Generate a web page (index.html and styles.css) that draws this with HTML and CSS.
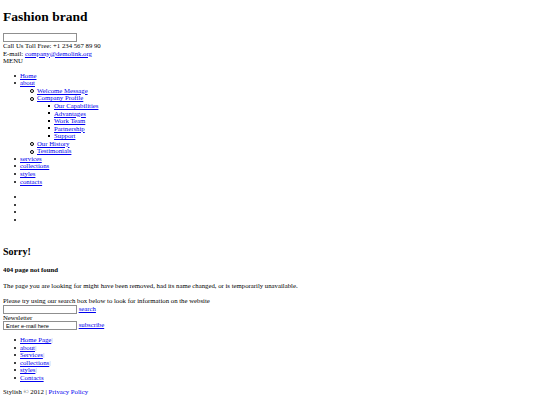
FILE: index.html
```html
<!DOCTYPE html>
<html>
<head>
<meta charset="utf-8">
<title>Fashion brand</title>
<link rel="stylesheet" href="styles.css">
</head>
<body class="page">
<div class="header">
<h1 class="logo">Fashion brand</h1>
<form class="form"><input type="text" class="field"></form>
<div>Call Us Toll Free: +1 234 567 89 90</div>
<div>E-mail: <a href="#">company@demolink.org</a></div>
<div>MENU</div>
<ul class="list">
<li><a href="#">Home</a></li>
<li><a href="#">about</a>
<ul class="sublist">
<li><a href="#">Welcome Message</a></li>
<li><a href="#">Company Profile</a>
<ul class="sublist deep">
<li><a href="#">Our Capabilities</a></li>
<li><a href="#">Advantages</a></li>
<li><a href="#">Work Team</a></li>
<li><a href="#">Partnership</a></li>
<li><a href="#">Support</a></li>
</ul>
</li>
<li><a href="#">Our History</a></li>
<li><a href="#">Testimonials</a></li>
</ul>
</li>
<li><a href="#">services</a></li>
<li><a href="#">collections</a></li>
<li><a href="#">styles</a></li>
<li><a href="#">contacts</a></li>
</ul>
<ul class="list social">
<li></li>
<li></li>
<li></li>
<li></li>
</ul>
</div>
<div class="content">
<h2 class="title">Sorry!</h2>
<h4 class="subtitle">404 page not found</h4>
<p class="text">The page you are looking for might have been removed, had its name changed, or is temporarily unavailable.</p>
Please try using our search box below to look for information on the website
<form class="form"><input type="text" class="field"> <a href="#">search</a></form>
</div>
<div class="footer">
<div>Newsletter</div>
<form class="form"><input type="text" class="field" value="Enter e-mail here"> <a href="#">subscribe</a></form>
<ul class="list footer-list">
<li><a href="#">Home Page</a><span class="sep">|</span></li>
<li><a href="#">about</a><span class="sep">|</span></li>
<li><a href="#">Services</a><span class="sep">|</span></li>
<li><a href="#">collections</a><span class="sep">|</span></li>
<li><a href="#">styles</a><span class="sep">|</span></li>
<li><a href="#">Contacts</a></li>
</ul>
<div>Stylish &copy; 2012 | <a href="#">Privacy Policy</a></div>
</div>
</body>
</html>
```
FILE: styles.css
```css
.page {
  margin: 3px;
  font-family: "Liberation Serif", "Times New Roman", serif;
  font-size: 6.75px;
  line-height: 7.57px;
  color: #000;
}
a {
  color: #0000ee;
}
.logo {
  font-size: 13.5px;
  line-height: 15px;
  margin: 6px 0 9px;
}
.form {
  margin: 0;
}
.field {
  box-sizing: border-box;
  width: 74px;
  height: 9px;
  padding: 0 2px;
  margin: 0;
  border: 1px solid #8f8f8f;
  font-family: "Liberation Sans", Arial, sans-serif;
  font-size: 5.6px;
  vertical-align: middle;
}
.list,
.list .sublist {
  list-style: none;
}
.list {
  margin: 7px 0;
  padding-left: 17px;
}
.list li {
  position: relative;
}
.list li::before {
  content: "";
  position: absolute;
  left: -6px;
  top: 3px;
  width: 2px;
  height: 2px;
  border-radius: 50%;
  background: #000;
}
.list .sublist {
  margin: 0;
  padding-left: 17px;
}
.list .sublist li::before {
  left: -7px;
  top: 2.5px;
  width: 2px;
  height: 2px;
  background: transparent;
  border: 0.6px solid #000;
}
.list .sublist.deep li::before {
  left: -6.5px;
  top: 2.8px;
  width: 2px;
  height: 2px;
  border: 0;
  border-radius: 0;
  background: #000;
}
.social {
  margin-top: 8px;
}
.social li {
  height: 7.57px;
}
.content {
  margin-top: 23px;
}
.title {
  font-size: 10px;
  line-height: 11.5px;
  margin: 8px 0;
}
.subtitle {
  font-size: 6.75px;
  line-height: 7.57px;
  margin: 8px 0 9px;
}
.text {
  margin: 7px 0;
}
.footer-list {
  margin: 6px 0;
}
.sep {
  color: #8f8fef;
}
```
